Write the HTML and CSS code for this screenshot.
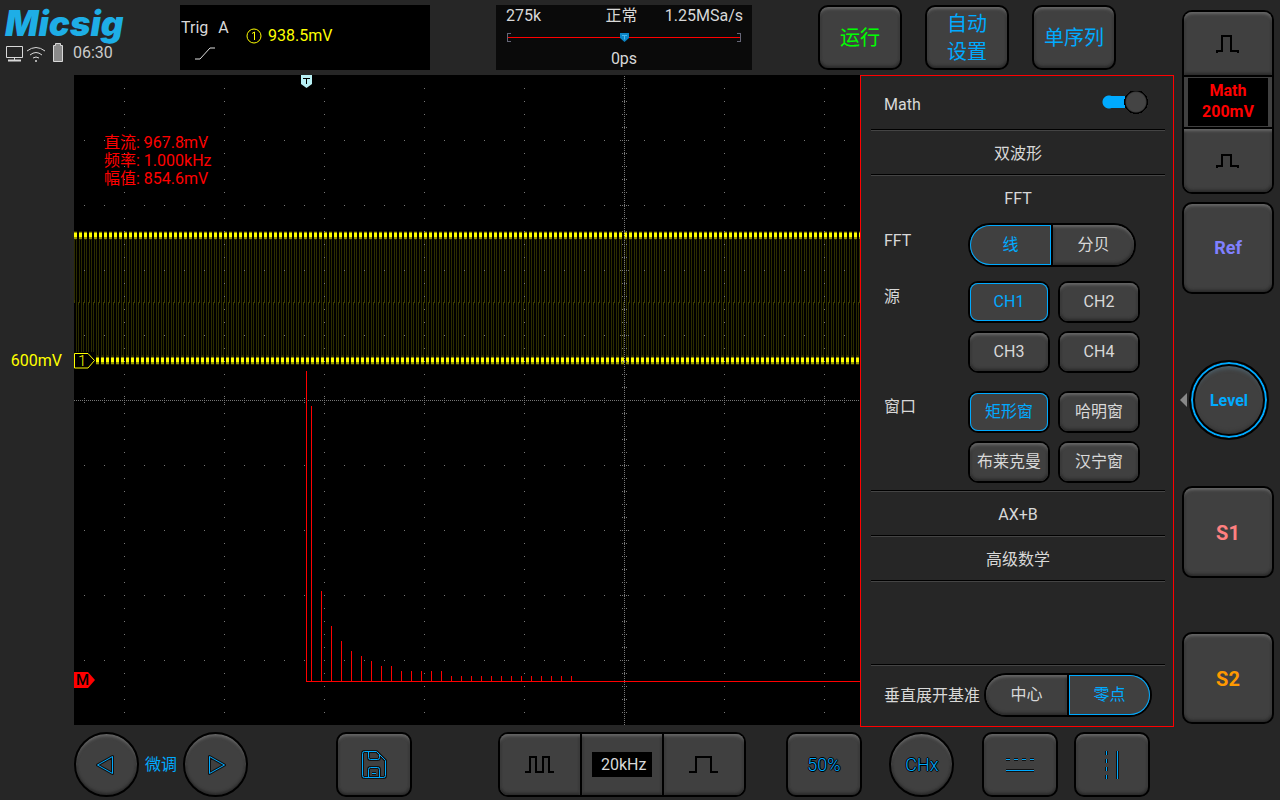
FILE: index.html
```
<!DOCTYPE html>
<html lang="zh-CN">
<head>
    <meta charset="UTF-8">
    <meta name="viewport" content="width=device-width, initial-scale=1.0">
    <title>Micsig</title>
    <link rel="stylesheet" href="styles.css">
</head>
<body>
    <div class="main">
        <header class="header">
            <div class="brand">
                <div class="logo">Micsig</div>
                <div class="status">
                    <svg width="60" height="20" viewBox="0 0 60 20" fill="none" stroke="#d8d8d8">
                        <path d="M1.500 3.500h16v11h-16z M9.500 14v4" stroke-width="1"/>
                        <path d="M3 17.500h13" stroke-width="2"/>
                        <path d="M22 8q9-7 18 0 M25 12q6-5 12 0" stroke-width="1"/>
                        <path d="M28 15q3-2 6 0"/>
                        <circle cx="31" cy="18" r="1" fill="#d8d8d8" stroke="none"/>
                        <path d="M48.500 2.500h2v-2h5v2h2v16h-9z" fill="#8a8a8a"/>
                    </svg>
                    <span>06:30</span>
                </div>
            </div>

            <div class="trig">
                <div class="trig-type">
                    <div><span>Trig</span><span>A</span></div>
                    <svg width="20" height="13" viewBox="0 0 20 13" fill="none" stroke="#e0e0e0">
                        <path d="M0 12h5L15 1h5"/>
                    </svg>
                </div>
                <div class="trig-level">
                    <svg width="16" height="16" viewBox="0 0 16 16" fill="none" stroke="#ff0">
                        <circle cx="8" cy="8" r="7"/>
                        <path d="M6 5.500L8.500 4v8"/>
                    </svg>
                    <span>938.5mV</span>
                </div>
            </div>

            <div class="timebase">
                <div class="timebase-row"><span>275k</span><span>正常</span><span>1.25MSa/s</span></div>
                <div class="memory">
                    <svg width="9" height="9" viewBox="0 0 9 9"><path d="M0 0h9v5L4.500 9 0 5z" fill="#0a84c6"/><path d="M2 2.500h5M4.500 2.500v4" stroke="#4ab8f0"/></svg>
                </div>
                <div class="delay">0ps</div>
            </div>

            <div class="run-buttons">
                <button class="btn run">运行</button>
                <button class="btn">自动<br>设置</button>
                <button class="btn">单序列</button>
            </div>
        </header>

        <div class="middle">
            <div class="gutter">600mV</div>

            <div class="scope">
                <svg class="plot" width="100%" height="100%" shape-rendering="crispEdges">
                    <defs>
                        <pattern id="grid-v" x="50" width="100" height="13" patternUnits="userSpaceOnUse"><rect width="1" height="1" fill="#777"/></pattern>
                        <pattern id="grid-h" x="10" width="20" height="65" patternUnits="userSpaceOnUse"><rect width="1" height="1" fill="#777"/></pattern>
                        <pattern id="dots" width="2" height="2" y="1" patternUnits="userSpaceOnUse"><rect width="1" height="1" fill="#777"/></pattern>
                        <pattern id="dots-h" width="2" height="1" patternUnits="userSpaceOnUse"><rect width="1" height="1" fill="#777"/></pattern>
                        <pattern id="tick-v" width="2" height="13" patternUnits="userSpaceOnUse"><rect width="1" height="1" fill="#777"/></pattern>
                        <pattern id="tick-v-big" width="2" height="65" patternUnits="userSpaceOnUse"><rect width="1" height="1" fill="#777"/></pattern>
                        <pattern id="tick-h" x="10" width="20" height="4" y="323" patternUnits="userSpaceOnUse"><rect width="1" height="1" fill="#777"/></pattern>
                        <pattern id="tick-h-big" x="50" width="100" height="8" y="321" patternUnits="userSpaceOnUse"><rect width="1" height="1" fill="#777"/></pattern>
                        <pattern id="wave-top" width="5" height="11" y="154" patternUnits="userSpaceOnUse">
                            <rect width="3" height="9" y="2" fill="#2c2c00"/>
                            <rect width="3" height="7" y="3" fill="#999900"/>
                            <rect width="3" height="4" y="4" fill="#ffff00"/>
                        </pattern>
                        <pattern id="wave-low" width="5" height="11" x="2" y="280" patternUnits="userSpaceOnUse">
                            <rect width="3" height="10" fill="#2c2c00"/>
                            <rect width="3" height="7" y="2" fill="#999900"/>
                            <rect width="3" height="4" y="3" fill="#ffff00"/>
                        </pattern>
                        <pattern id="edge-top" width="5" height="10" patternUnits="userSpaceOnUse"><path d="M0 0h1v10H0z M2 0h1v10H2z" fill="#2c2c00"/></pattern>
                        <pattern id="edge-low" width="5" height="10" patternUnits="userSpaceOnUse"><path d="M2 0h1v10H2z M4 0h1v10H4z" fill="#2c2c00"/></pattern>
                        <pattern id="edge-mid" width="5" height="5" y="225" patternUnits="userSpaceOnUse"><path d="M0 0h1v3H0z M4 2h1v3H4z" fill="#3c3c00"/></pattern>
                    </defs>

                    <!-- CH1 square wave -->
                    <rect y="164" width="100%" height="63" fill="url(#edge-top)"/>
                    <rect y="227" width="100%" height="54" fill="url(#edge-low)"/>
                    <rect y="225" width="100%" height="5" fill="url(#edge-mid)"/>
                    <rect y="154" width="100%" height="11" fill="url(#wave-top)"/>
                    <rect y="280" width="100%" height="11" fill="url(#wave-low)"/>

                    <!-- graticule -->
                    <rect y="1" width="100%" height="100%" fill="url(#grid-v)"/>
                    <rect y="1" width="100%" height="100%" fill="url(#grid-h)"/>
                    <rect x="550" y="1" width="1" height="100%" fill="url(#dots)"/>
                    <rect x="548" y="1" width="5" height="100%" fill="url(#tick-v)"/>
                    <rect x="546" y="1" width="9" height="100%" fill="url(#tick-v-big)"/>
                    <rect y="325" width="100%" height="1" fill="url(#dots-h)"/>
                    <rect y="323" width="100%" height="5" fill="url(#tick-h)"/>
                    <rect y="321" width="100%" height="9" fill="url(#tick-h-big)"/>

                    <!-- FFT spectrum -->
                    <g fill="#f00">
                        <rect x="232" y="606" width="100%" height="1"/>
                        <rect x="232" y="296" width="1" height="310"/>
                        <path d="M237 331h1v275h-1z M247 516h1v90h-1z M257 551h1v55h-1z M267 566h1v40h-1z M277 576h1v30h-1z M287 581h1v25h-1z M297 586h1v20h-1z M307 591h1v15h-1z M317 591h1v15h-1z M327 596h1v10h-1z M337 596h1v10h-1z M347 596h1v10h-1z M357 596h1v10h-1z M367 596h1v10h-1z"/>
                        <path d="M377 601h1v5h-1z M387 601h1v5h-1z M397 601h1v5h-1z M407 601h1v5h-1z M417 601h1v5h-1z M427 601h1v5h-1z M437 601h1v5h-1z M447 601h1v5h-1z M457 601h1v5h-1z M467 601h1v5h-1z M477 601h1v5h-1z M487 601h1v5h-1z M497 601h1v5h-1z"/>
                    </g>

                    <!-- channel and trigger markers -->
                    <g shape-rendering="auto">
                        <rect y="277" width="22" height="18" fill="#000"/>
                        <path d="M0.500 278.500h13.500l6.500 7-6.500 7.500H0.500z" fill="#000" stroke="#ff0"/>
                        <text class="marker" x="4" y="291" fill="#ff0">1</text>
                        <path d="M0 597h14l7 8-7 8H0z" fill="#f00"/>
                        <text class="marker dark" x="2" y="610" fill="#000">M</text>
                        <path d="M227 0h11v9l-5.500 4-5.500-4z" fill="#b8f0f4"/>
                        <path d="M229 3.500h7 M232.500 3v6" stroke="#000" fill="none"/>
                    </g>
                </svg>
                <div class="measures">
                    <div>直流: 967.8mV</div>
                    <div>频率: 1.000kHz</div>
                    <div>幅值: 854.6mV</div>
                </div>
            </div>

            <div class="panel">
                <div class="panel-head">
                    <label for="math-on">Math</label>
                    <input type="checkbox" id="math-on" class="switch" checked>
                </div>
                <button class="panel-title">双波形</button>
                <div class="fft">
                    <button class="panel-title">FFT</button>
                    <div class="field">
                        <span class="field-name">FFT</span>
                        <div class="segment">
                            <label><input type="radio" name="scale" checked><span>线</span></label>
                            <label><input type="radio" name="scale"><span>分贝</span></label>
                        </div>
                    </div>
                    <div class="field">
                        <span class="field-name">源</span>
                        <div class="options">
                            <label><input type="radio" name="source" checked><span>CH1</span></label>
                            <label><input type="radio" name="source"><span>CH2</span></label>
                            <label><input type="radio" name="source"><span>CH3</span></label>
                            <label><input type="radio" name="source"><span>CH4</span></label>
                        </div>
                    </div>
                    <div class="field window">
                        <span class="field-name">窗口</span>
                        <div class="options">
                            <label><input type="radio" name="window" checked><span>矩形窗</span></label>
                            <label><input type="radio" name="window"><span>哈明窗</span></label>
                            <label><input type="radio" name="window"><span>布莱克曼</span></label>
                            <label><input type="radio" name="window"><span>汉宁窗</span></label>
                        </div>
                    </div>
                </div>
                <button class="panel-title">AX+B</button>
                <button class="panel-title">高级数学</button>
                <div class="panel-space"></div>
                <div class="panel-foot">
                    <span>垂直展开基准</span>
                    <div class="segment">
                        <label><input type="radio" name="base"><span>中心</span></label>
                        <label><input type="radio" name="base" checked><span>零点</span></label>
                    </div>
                </div>
            </div>
        </div>

        <footer class="footer">
            <div class="fine">
                <button class="btn round" aria-label="左移">
                    <svg class="icon" width="21" height="23" viewBox="0 0 21 23"><path class="shade" d="M16.500 3.500v17L1.500 12z"/><path d="M16.500 3.500v17L1.500 12z"/></svg>
                </button>
                <span>微调</span>
                <button class="btn round" aria-label="右移">
                    <svg class="icon" width="21" height="23" viewBox="0 0 21 23"><path class="shade" d="M4.500 3.500v17l15-8.500z"/><path d="M4.500 3.500v17l15-8.500z"/></svg>
                </button>
            </div>
            <button class="btn box save" aria-label="保存">
                <svg class="icon" width="28" height="31" viewBox="0 0 28 31">
                    <path class="shade" d="M4.500 2.500h12l9 9v15q0 2-2 2h-19q-2 0-2-2v-22q0-2 2-2z M8.500 2.500v6q0 2 2 2h7q2 0 2-2v-3 M8.500 28.500v-8q0-2 2-2h7q2 0 2 2v8 M12 24.500h4"/>
                    <path d="M4.500 2.500h12l9 9v15q0 2-2 2h-19q-2 0-2-2v-22q0-2 2-2z M8.500 2.500v6q0 2 2 2h7q2 0 2-2v-3 M8.500 28.500v-8q0-2 2-2h7q2 0 2 2v8 M12 24.500h4"/>
                </svg>
            </button>
            <div class="freq">
                <button aria-label="减小">
                    <svg class="pulse" width="30" height="19" viewBox="0 0 30 19"><path d="M1 18v-1h4V2h6v15h7V2h6v15h4v1"/></svg>
                </button>
                <div class="freq-value"><span>20kHz</span></div>
                <button aria-label="增大">
                    <svg class="pulse" width="30" height="19" viewBox="0 0 30 19"><path d="M1 18v-1h6V2h15v15h6v1"/></svg>
                </button>
            </div>
            <button class="btn box"><span class="thin">50%</span></button>
            <button class="btn round"><span class="thin">CHx</span></button>
            <div class="cursors">
                <button class="btn box" aria-label="水平光标">
                    <svg class="icon" width="32" height="19" viewBox="0 0 32 19"><path class="shade" d="M2 4.500h4m4 0h4m4 0h4m4 0h4M2 15.500h28"/><path d="M2 4.500h4m4 0h4m4 0h4m4 0h4M2 15.500h28"/></svg>
                </button>
                <button class="btn box" aria-label="垂直光标">
                    <svg class="icon" width="18" height="31" viewBox="0 0 18 31"><path class="shade" d="M3.500 2v4m0 4v4m0 4v4m0 4v4M14.500 2v28"/><path d="M3.500 2v4m0 4v4m0 4v4m0 4v4M14.500 2v28"/></svg>
                </button>
            </div>
        </footer>
    </div>

    <aside class="side">
        <div class="channel">
            <button aria-label="增大幅度">
                <svg class="pulse" width="26" height="20" viewBox="0 0 26 20"><path d="M2 19v-2h5V2h9v15h7v2"/></svg>
            </button>
            <div class="channel-value">Math<br>200mV</div>
            <button aria-label="减小幅度">
                <svg class="pulse" width="26" height="16" viewBox="0 0 26 16"><path d="M2 15v-2h5V2h9v11h7v2"/></svg>
            </button>
        </div>
        <button class="btn square ref">Ref</button>
        <button class="level">Level</button>
        <button class="btn square s1">S1</button>
        <button class="btn square s2">S2</button>
    </aside>
</body>
</html>
```
FILE: styles.css
```
:root {
    --bg: #262626;
    --key: #404040;
    --blue: #00aaff;
    --text: #d8d8d8;
    --bevel: inset 0 3px 3px -1px #686868, inset 0 -3px 3px -1px #2a2a2a, inset 2px 0 2px -1px #333, inset -2px 0 2px -1px #333;
}

* {
    box-sizing: border-box;
}

body {
    margin: 0;
    height: 100vh;
    display: flex;
    background: var(--bg);
    color: var(--text);
    font-family: Roboto, "Noto Sans CJK SC", sans-serif;
    font-size: 16px;
    line-height: 20px;
    overflow: hidden;
}

button {
    padding: 0;
    border: none;
    background: none;
    color: inherit;
    font: inherit;
    cursor: pointer;
}

.main {
    flex: 1;
    display: flex;
    flex-direction: column;
    min-width: 0;
}

/* keys */
.btn {
    display: flex;
    align-items: center;
    justify-content: center;
    flex: none;
    border: 2px solid #000;
    border-radius: 10px;
    background: var(--key);
    box-shadow: var(--bevel);
    color: var(--blue);
}

.round {
    width: 65px;
    height: 65px;
    border-radius: 50%;
}

.box {
    width: 76px;
    height: 65px;
}

.icon {
    fill: none;
    stroke: var(--blue);
    stroke-width: 1;
    stroke-linejoin: round;
}

.icon .shade {
    stroke: #111;
    stroke-width: 3;
}

.pulse {
    fill: none;
    stroke: #000;
    stroke-width: 2;
}

/* header */
.header {
    display: flex;
    height: 75px;
    padding: 5px 0;
    flex: none;
}

.brand {
    width: 180px;
    padding-left: 5px;
}

.logo {
    color: #1eaee6;
    font-family: Inter, Arial, sans-serif;
    font-size: 35px;
    font-weight: 900;
    font-style: italic;
    line-height: 36px;
}

.status {
    display: flex;
    gap: 8px;
    align-items: center;
    margin-top: 2px;
    color: #ccc;
}

.trig {
    display: flex;
    width: 250px;
    background: #000;
}

.trig-type {
    width: 66px;
    padding: 13px 0 0 1px;
}

.trig-type span {
    margin-right: 10px;
}

.trig-type svg {
    display: block;
    margin: 9px 0 0 14px;
}

.trig-level {
    display: flex;
    align-items: center;
    gap: 6px;
    height: 62px;
    color: #ff0;
}

.timebase {
    width: 256px;
    margin: 0 66px;
    background: #0a0a0a;
}

.timebase-row {
    display: grid;
    grid-template-columns: 1fr auto 1fr;
    padding: 1px 9px 0 10px;
}

.timebase-row span:nth-child(2) {
    margin-right: 6px;
}

.timebase-row span:last-child {
    text-align: right;
}

.memory {
    height: 9px;
    margin: 7px 11px;
    border: 1px solid #667;
    border-width: 0 1px;
    display: flex;
    justify-content: center;
    background:
        linear-gradient(#f00, #f00) 0 4px / 100% 1px no-repeat,
        linear-gradient(#667, #667) 0 0 / 3px 1px no-repeat,
        linear-gradient(#667, #667) 0 8px / 3px 1px no-repeat,
        linear-gradient(#667, #667) 100% 0 / 3px 1px no-repeat,
        linear-gradient(#667, #667) 100% 8px / 3px 1px no-repeat;
}

.delay {
    text-align: center;
}

.run-buttons {
    display: flex;
    gap: 23px;
}

.run-buttons .btn {
    width: 84px;
    height: 65px;
    font-size: 20px;
    line-height: 28px;
}

.run-buttons .run {
    color: #0f0;
}

/* scope */
.middle {
    flex: 1;
    display: flex;
    min-height: 0;
}

.gutter {
    width: 74px;
    padding: 276px 12px 0 0;
    color: #ff0;
    text-align: right;
}

.scope {
    flex: 1;
    min-width: 0;
    position: relative;
    margin-bottom: 2px;
    background: #000;
}

.plot {
    display: block;
}

.marker {
    font-size: 15px;
    font-weight: 300;
}

.marker.dark {
    font-weight: 500;
}

.measures {
    position: absolute;
    left: 30px;
    top: 59px;
    color: #f00;
    line-height: 18px;
}

/* math panel */
.panel {
    width: 314px;
    display: flex;
    flex-direction: column;
    padding: 0 8px 0 10px;
    border: 1px solid #f00;
}

.panel-head,
.panel-title,
.fft,
.panel-space {
    border-bottom: 1px solid #444;
    box-shadow: inset 0 -1px #000;
}

.panel-head {
    display: flex;
    align-items: center;
    justify-content: space-between;
    height: 55px;
    padding: 0 16px 0 13px;
}

.panel-head label {
    padding-top: 4px;
}

.panel-title {
    display: block;
    width: 100%;
    height: 45px;
    padding-top: 2px;
}

.switch {
    appearance: none;
    width: 48px;
    height: 24px;
    margin: 0;
    background:
        radial-gradient(circle at 35px 11px, #444 9px, #3a3a3a 10px, #000 11px, #000 12px, transparent 12px),
        linear-gradient(var(--blue), var(--blue)) 8px 5px / 26px 12px no-repeat,
        radial-gradient(circle at 8px 11px, var(--blue) 6px, transparent 7px);
    cursor: pointer;
}

.fft {
    padding-bottom: 8px;
}

.fft .panel-title {
    padding-top: 0;
    border: none;
    box-shadow: none;
}

.field {
    display: flex;
    padding: 0 16px 0 13px;
    margin-top: 14px;
}

.field-name {
    flex: none;
    width: 84px;
    line-height: 32px;
}

.panel-title + .field {
    margin-top: 2px;
}

.panel-title + .field .field-name {
    line-height: 36px;
}

.field.window {
    margin-top: 18px;
}

.options {
    display: grid;
    grid-template-columns: 82px 82px;
    gap: 8px;
}

.options input,
.segment input {
    position: absolute;
    opacity: 0;
}

.options label,
.segment label {
    cursor: pointer;
}

.options span,
.segment span {
    display: flex;
    align-items: center;
    justify-content: center;
    height: 100%;
    background: var(--key);
    box-shadow: var(--bevel);
    border-radius: inherit;
}

.options label {
    height: 42px;
    border: 2px solid #000;
    border-radius: 10px;
}

.options span {
    border-radius: 8px;
}

.segment {
    display: grid;
    grid-template-columns: 1fr 1fr;
    gap: 2px;
    width: 168px;
    height: 44px;
    border: 2px solid #000;
    border-radius: 22px;
    background: #000;
}

.segment label:first-child {
    border-radius: 20px 0 0 20px;
}

.segment label:last-child {
    border-radius: 0 20px 20px 0;
}

.options input:checked + span,
.segment input:checked + span {
    box-shadow: inset 0 0 0 1px var(--blue);
    color: var(--blue);
}

.panel-space {
    flex: 1;
}

.panel-foot {
    display: flex;
    align-items: center;
    gap: 4px;
    height: 60px;
    padding: 0 0 2px 13px;
    white-space: nowrap;
}

.panel-foot > span {
    padding-top: 2px;
}

/* bottom keys */
.footer {
    display: flex;
    height: 73px;
    padding: 5px 24px 0 74px;
    flex: none;
    justify-content: space-between;
}

.fine {
    display: flex;
    align-items: center;
    gap: 6px;
    height: 65px;
    color: var(--blue);
}

.save {
    margin: 0 59px 0 60px;
}

.freq,
.channel {
    border: 2px solid #000;
    border-radius: 10px;
    background: #000;
}

.freq {
    display: grid;
    grid-template-columns: repeat(3, 1fr);
    gap: 2px;
    width: 248px;
    height: 65px;
    margin-right: 12px;
}

.freq button,
.freq-value,
.channel button {
    display: flex;
    align-items: center;
    justify-content: center;
    background: var(--key);
    box-shadow: var(--bevel);
}

.freq button:first-child {
    border-radius: 8px 0 0 8px;
}

.freq button:last-child {
    border-radius: 0 8px 8px 0;
}

.freq-value span {
    padding: 3px 6px 2px 9px;
    background: #000;
}

.thin {
    font-size: 18px;
    font-weight: 300;
    text-shadow: 1px 0 #000, -1px 0 #000, 0 1px #000, 0 -1px #000;
}

.cursors {
    display: flex;
    gap: 16px;
}

/* right column */
.side {
    display: flex;
    flex-direction: column;
    align-items: center;
    width: 106px;
    padding: 10px 6px 0 8px;
}

.channel {
    width: 92px;
    height: 184px;
    display: flex;
    flex-direction: column;
    gap: 2px;
    margin-bottom: 8px;
}

.channel button {
    flex: 1;
}

.channel button:first-child {
    border-radius: 8px 8px 0 0;
}

.channel button:last-child {
    border-radius: 0 0 8px 8px;
}

.channel-value {
    border: 1px solid var(--key);
    border-width: 1px 4px;
    padding: 2px 0 4px;
    color: #f00;
    font-weight: bold;
    line-height: 21px;
    text-align: center;
}

.square {
    width: 92px;
    height: 92px;
    padding-top: 2px;
    font-size: 20px;
    font-weight: bold;
}

.ref {
    padding-top: 0;
    color: #8080ff;
    font-size: 18px;
}

.level {
    position: relative;
    flex: none;
    width: 80px;
    height: 80px;
    margin: 66px 0 46px 2px;
    padding-top: 2px;
    border: 2px solid #000;
    border-radius: 50%;
    background: var(--key);
    box-shadow: inset 0 0 0 2px var(--blue), inset 0 0 0 4px #000, inset 0 7px 4px -1px #4d6470, inset 0 -6px 4px -1px #2a2a2a;
    color: var(--blue);
    font-weight: bold;
}

.level::before {
    content: "";
    position: absolute;
    left: -11px;
    top: 31px;
    border: 7px solid transparent;
    border-left: none;
    border-right-color: #888;
}

.s1 {
    margin-bottom: 54px;
    color: #ff8080;
}

.s2 {
    color: #ff9900;
}
```
